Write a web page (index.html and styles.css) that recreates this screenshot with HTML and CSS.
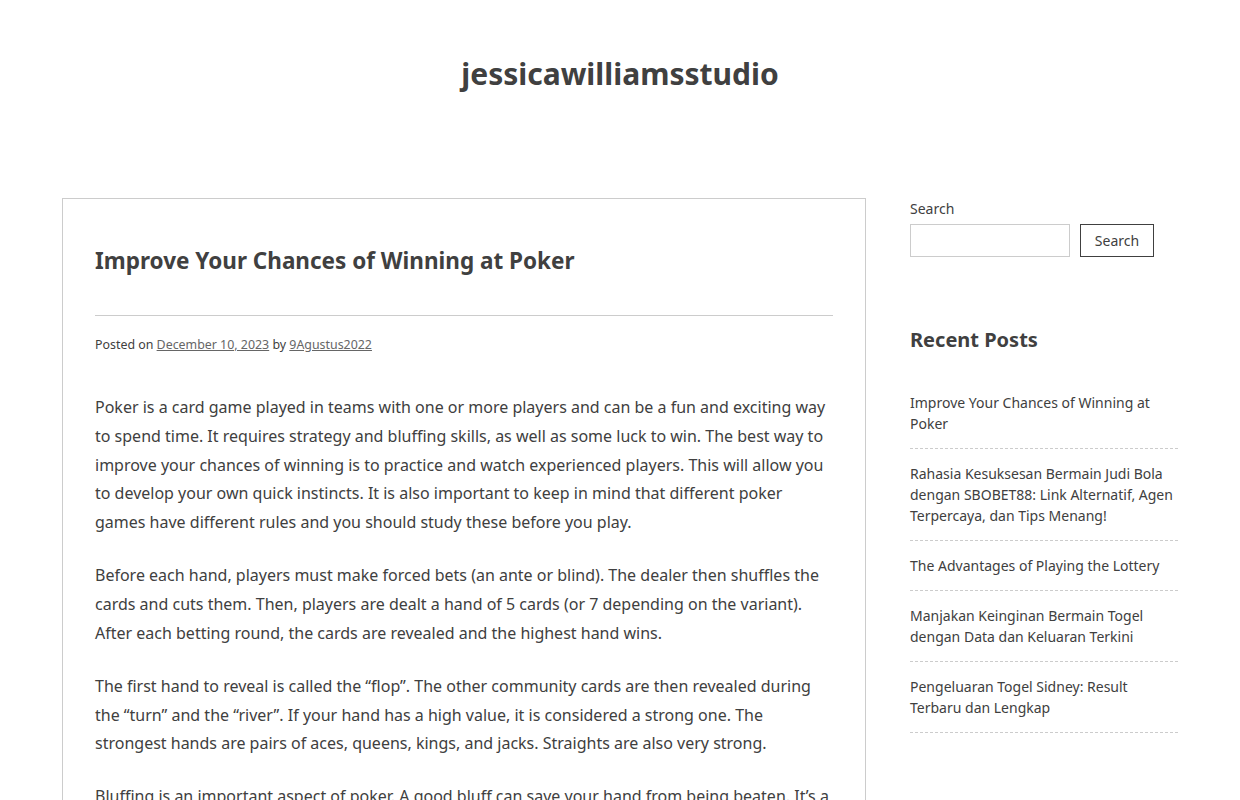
FILE: index.html
```html
<!DOCTYPE html>
<html lang="en">
<head>
<meta charset="utf-8">
<title>jessicawilliamsstudio</title>
<link rel="stylesheet" href="styles.css">
</head>
<body>
<header class="site-header">
  <h1 class="site-title">jessicawilliamsstudio</h1>
</header>
<div class="container">
  <main class="content">
    <article class="post">
      <h2 class="post-title">Improve Your Chances of Winning at Poker</h2>
      <div class="post-meta">Posted on <a href="#">December 10, 2023</a> by <a href="#">9Agustus2022</a></div>
      <div class="post-body">
        <p>Poker is a card game played in teams with one or more players and can be a fun and exciting way to spend time. It requires strategy and bluffing skills, as well as some luck to win. The best way to improve your chances of winning is to practice and watch experienced players. This will allow you to develop your own quick instincts. It is also important to keep in mind that different poker games have different rules and you should study these before you play.</p>
        <p>Before each hand, players must make forced bets (an ante or blind). The dealer then shuffles the cards and cuts them. Then, players are dealt a hand of 5 cards (or 7 depending on the variant). After each betting round, the cards are revealed and the highest hand wins.</p>
        <p>The first hand to reveal is called the “flop”. The other community cards are then revealed during the “turn” and the “river”. If your hand has a high value, it is considered a strong one. The strongest hands are pairs of aces, queens, kings, and jacks. Straights are also very strong.</p>
        <p>Bluffing is an important aspect of poker. A good bluff can save your hand from being beaten. It’s a good idea to learn how to read your opponents and how to make them think you have a strong hand.</p>
      </div>
    </article>
  </main>
  <aside class="sidebar">
    <form class="search">
      <label class="search-label" for="s">Search</label>
      <div class="search-row">
        <input id="s" class="search-input" type="text">
        <button class="search-btn" type="button">Search</button>
      </div>
    </form>
    <section class="recent">
      <h2 class="widget-title">Recent Posts</h2>
      <ul class="recent-list">
        <li><a href="#">Improve Your Chances of Winning at Poker</a></li>
        <li><a href="#">Rahasia Kesuksesan Bermain Judi Bola dengan SBOBET88: Link Alternatif, Agen Terpercaya, dan Tips Menang!</a></li>
        <li><a href="#">The Advantages of Playing the Lottery</a></li>
        <li><a href="#">Manjakan Keinginan Bermain Togel dengan Data dan Keluaran Terkini</a></li>
        <li><a href="#">Pengeluaran Togel Sidney: Result Terbaru dan Lengkap</a></li>
      </ul>
    </section>
  </aside>
</div>
</body>
</html>
```

FILE: styles.css
```css
* { box-sizing: border-box; }
html, body { margin: 0; padding: 0; }
body {
  background: #fff;
  color: #404040;
  font-family: "Noto Sans", "Open Sans", sans-serif;
}
a { color: #404040; }

.site-header {
  padding: 52px 0 0;
  height: 198px;
  text-align: center;
}
.site-title {
  margin: 0;
  font-size: 30px;
  line-height: 44px;
  font-weight: 700;
  color: #404040;
}

.container {
  width: 1116px;
  margin: 0 auto;
  display: flex;
  gap: 44px;
  align-items: flex-start;
}
.content { width: 804px; flex: none; }
.post {
  border: 1px solid #ccc;
  padding: 44px 32px 40px;
}
.post-title {
  margin: 0;
  font-size: 22.5px;
  line-height: 36px;
  font-weight: 700;
  color: #404040;
  padding-bottom: 36px;
  border-bottom: 1px solid #ccc;
}
.post-meta {
  margin-top: 19px;
  font-size: 12.4px;
  line-height: 20px;
  color: #404040;
}
.post-meta a { color: #666; }
.post-body { margin-top: 38px; }
.post-body p {
  margin: 0 0 24.2px;
  font-size: 16px;
  line-height: 28.8px;
}

.sidebar { width: 268px; flex: none; padding-top: 1px; }
.search-label {
  display: block;
  font-size: 14px;
  line-height: 20px;
}
.search-row {
  display: flex;
  gap: 10px;
  margin-top: 5px;
}
.search-input {
  width: 160px;
  height: 33px;
  border: 1px solid #ccc;
  border-radius: 0;
  background: #fff;
  padding: 4px 8px;
}
.search-btn {
  width: 74px;
  height: 33px;
  border: 1px solid #404040;
  background: #fff;
  color: #404040;
  font-family: inherit;
  font-size: 14px;
  padding: 0;
}
.recent { margin-top: 68px; }
.widget-title {
  margin: 0;
  font-size: 20px;
  line-height: 30px;
  font-weight: 700;
  color: #404040;
}
.recent-list {
  list-style: none;
  margin: 37px 0 0;
  padding: 0;
}
.recent-list li {
  font-size: 14px;
  line-height: 21px;
  padding: 0 0 14px;
  margin-bottom: 14px;
  border-bottom: 1px dashed #ccc;
}
.recent-list a { text-decoration: none; color: #404040; }
```
